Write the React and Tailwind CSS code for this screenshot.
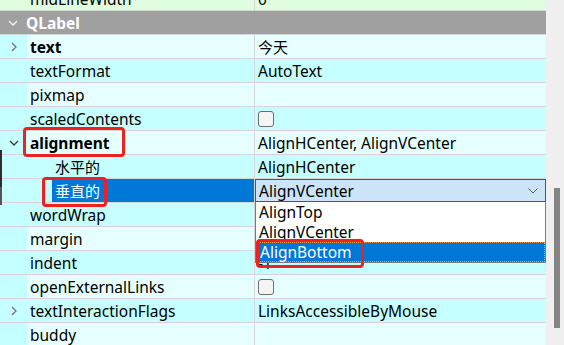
import React from "react";

const LIGHT = "bg-[#e6ffff]";
const DARK = "bg-[#c6ffff]";

function Chevron({ dir = "right", color = "#707070" }) {
  if (dir === "right")
    return (
      <svg width="8" height="10" viewBox="0 0 8 10" className="block">
        <path d="M2 1 L6 5 L2 9" fill="none" stroke={color} strokeWidth="1.3" />
      </svg>
    );
  return (
    <svg width="10" height="8" viewBox="0 0 10 8" className="block">
      <path d="M1 2 L5 6 L9 2" fill="none" stroke={color} strokeWidth="1.3" />
    </svg>
  );
}

function CheckBox() {
  return <div className="w-[16px] h-[16px] rounded-[3px] border border-[#6e6e6e] bg-[#f4f4f4] mb-[2px]" />;
}

function Row({ light, name, bold, expander, value, child, selected, cjk }) {
  const rowBg = light ? LIGHT : DARK;
  return (
    <div className={`flex h-[24px] shrink-0 border-b border-[#d6d6d6] ${rowBg}`}>
      <div className="flex w-[255px] shrink-0 border-r border-[#d6d6d6] h-full">
        <div
          className={`${child ? "w-[52px]" : "w-[27px]"} shrink-0 h-full flex items-center justify-start pl-[9px] ${DARK}`}
        >
          {expander === "right" && <div className="ml-[1px]"><Chevron dir="right" /></div>}
          {expander === "down" && <Chevron dir="down" color="#3a3a3a" />}
        </div>
        <div
          className={`flex-1 h-full flex items-center pl-[3px] pt-[2px] ${cjk ? "text-[15px]" : ""} ${
            selected ? "bg-[#0078d7] text-white" : "text-black"
          } ${bold ? "font-bold" : ""}`}
        >
          {name}
        </div>
      </div>
      <div className="flex-1 h-full flex items-center pl-[3px] pt-[2px] text-black">{value}</div>
    </div>
  );
}

export default function App() {
  return (
    <div
      className="w-[564px] h-[345px] overflow-hidden flex bg-[#f0f0f0] text-[15.5px] leading-none"
      style={{ fontFamily: '"Noto Sans", "Noto Sans CJK SC", sans-serif' }}
    >
      <div className="relative w-[546px] shrink-0 flex flex-col">
        {/* midLineWidth partial row */}
        <div className="flex h-[24px] shrink-0 mt-[-13px] border-b border-[#d6d6d6] bg-[#e0fde0]">
          <div className="w-[255px] shrink-0 border-r border-[#d6d6d6] flex items-center pl-[30px] pt-[2px]">midLineWidth</div>
          <div className="flex-1 flex items-center pl-[3px] pt-[2px]">0</div>
        </div>
        {/* QLabel header */}
        <div className="flex h-[24px] shrink-0 border-b border-[#d6d6d6] bg-[#a0a0a0] items-center">
          <div className="w-[26px] pl-[8px] flex items-center">
            <Chevron dir="down" color="#f2f2f2" />
          </div>
          <div className="text-white font-bold pt-[2px]">QLabel</div>
        </div>
        <Row light name="text" bold expander="right" value={<span className="text-[15px]">今天</span>} />
        <Row name="textFormat" value="AutoText" />
        <Row light name="pixmap" value="" />
        <Row name="scaledContents" value={<CheckBox />} />
        <Row light name="alignment" bold expander="down" value="AlignHCenter, AlignVCenter" />
        <Row name="水平的" child cjk value="AlignHCenter" />
        <Row light name="垂直的" child cjk selected value="" />
        <Row name="wordWrap" value="" />
        <Row light name="margin" value="0" />
        <Row name="indent" value="-1" />
        <Row light name="openExternalLinks" value={<CheckBox />} />
        <Row name="textInteractionFlags" expander="right" value="LinksAccessibleByMouse" />
        <Row light name="buddy" value="" />

        {/* left edge dark strip */}
        <div className="absolute left-0 top-[150px] w-[2px] h-[37px] bg-[#2e2e2e]" />
        <div className="absolute left-0 top-[187px] w-[2px] h-[18px] bg-[#555555]" />

        {/* combo box */}
        <div className="absolute left-[255px] top-[179px] w-[291px] h-[23px] border border-[#1f5fa8] bg-[#cce4f7] flex items-center pl-[3px] justify-between pr-[7px]">
          <span className="pt-[2px]">AlignVCenter</span>
          <svg width="10" height="6" viewBox="0 0 10 6">
            <path d="M0.5 0.5 L5 5 L9.5 0.5" fill="none" stroke="#555" strokeWidth="1" />
          </svg>
        </div>
        {/* popup */}
        <div className="absolute left-[255px] top-[202px] w-[291px] h-[61px] bg-white border-x border-b border-[#7a7a7a] flex flex-col">
          <div className="h-[20px] flex items-center pl-[3px] pt-[2px]">AlignTop</div>
          <div className="h-[20px] flex items-center pl-[3px] pt-[2px]">AlignVCenter</div>
          <div className="h-[20px] flex items-center pl-[3px] pt-[2px] bg-[#0078d7] text-white border border-dotted border-[#f0a050]">
            AlignBottom
          </div>
        </div>

        {/* red annotation boxes */}
        <div className="absolute left-[23px] top-[127px] w-[102px] h-[30px] border-[3px] border-[#f02020] rounded-[4px]" />
        <div className="absolute left-[42px] top-[177px] w-[65px] h-[30px] border-[3px] border-[#f02020] rounded-[4px]" />
        <div className="absolute left-[256px] top-[239px] w-[108px] h-[29px] border-[3px] border-[#f02020] rounded-[4px]" />
      </div>
      {/* scrollbar */}
      <div className="w-[18px] shrink-0 bg-[#f0f0f0] pt-[188px] pl-[8px]">
        <div className="w-[6px] h-[140px] bg-[#858585]" />
      </div>
    </div>
  );
}
